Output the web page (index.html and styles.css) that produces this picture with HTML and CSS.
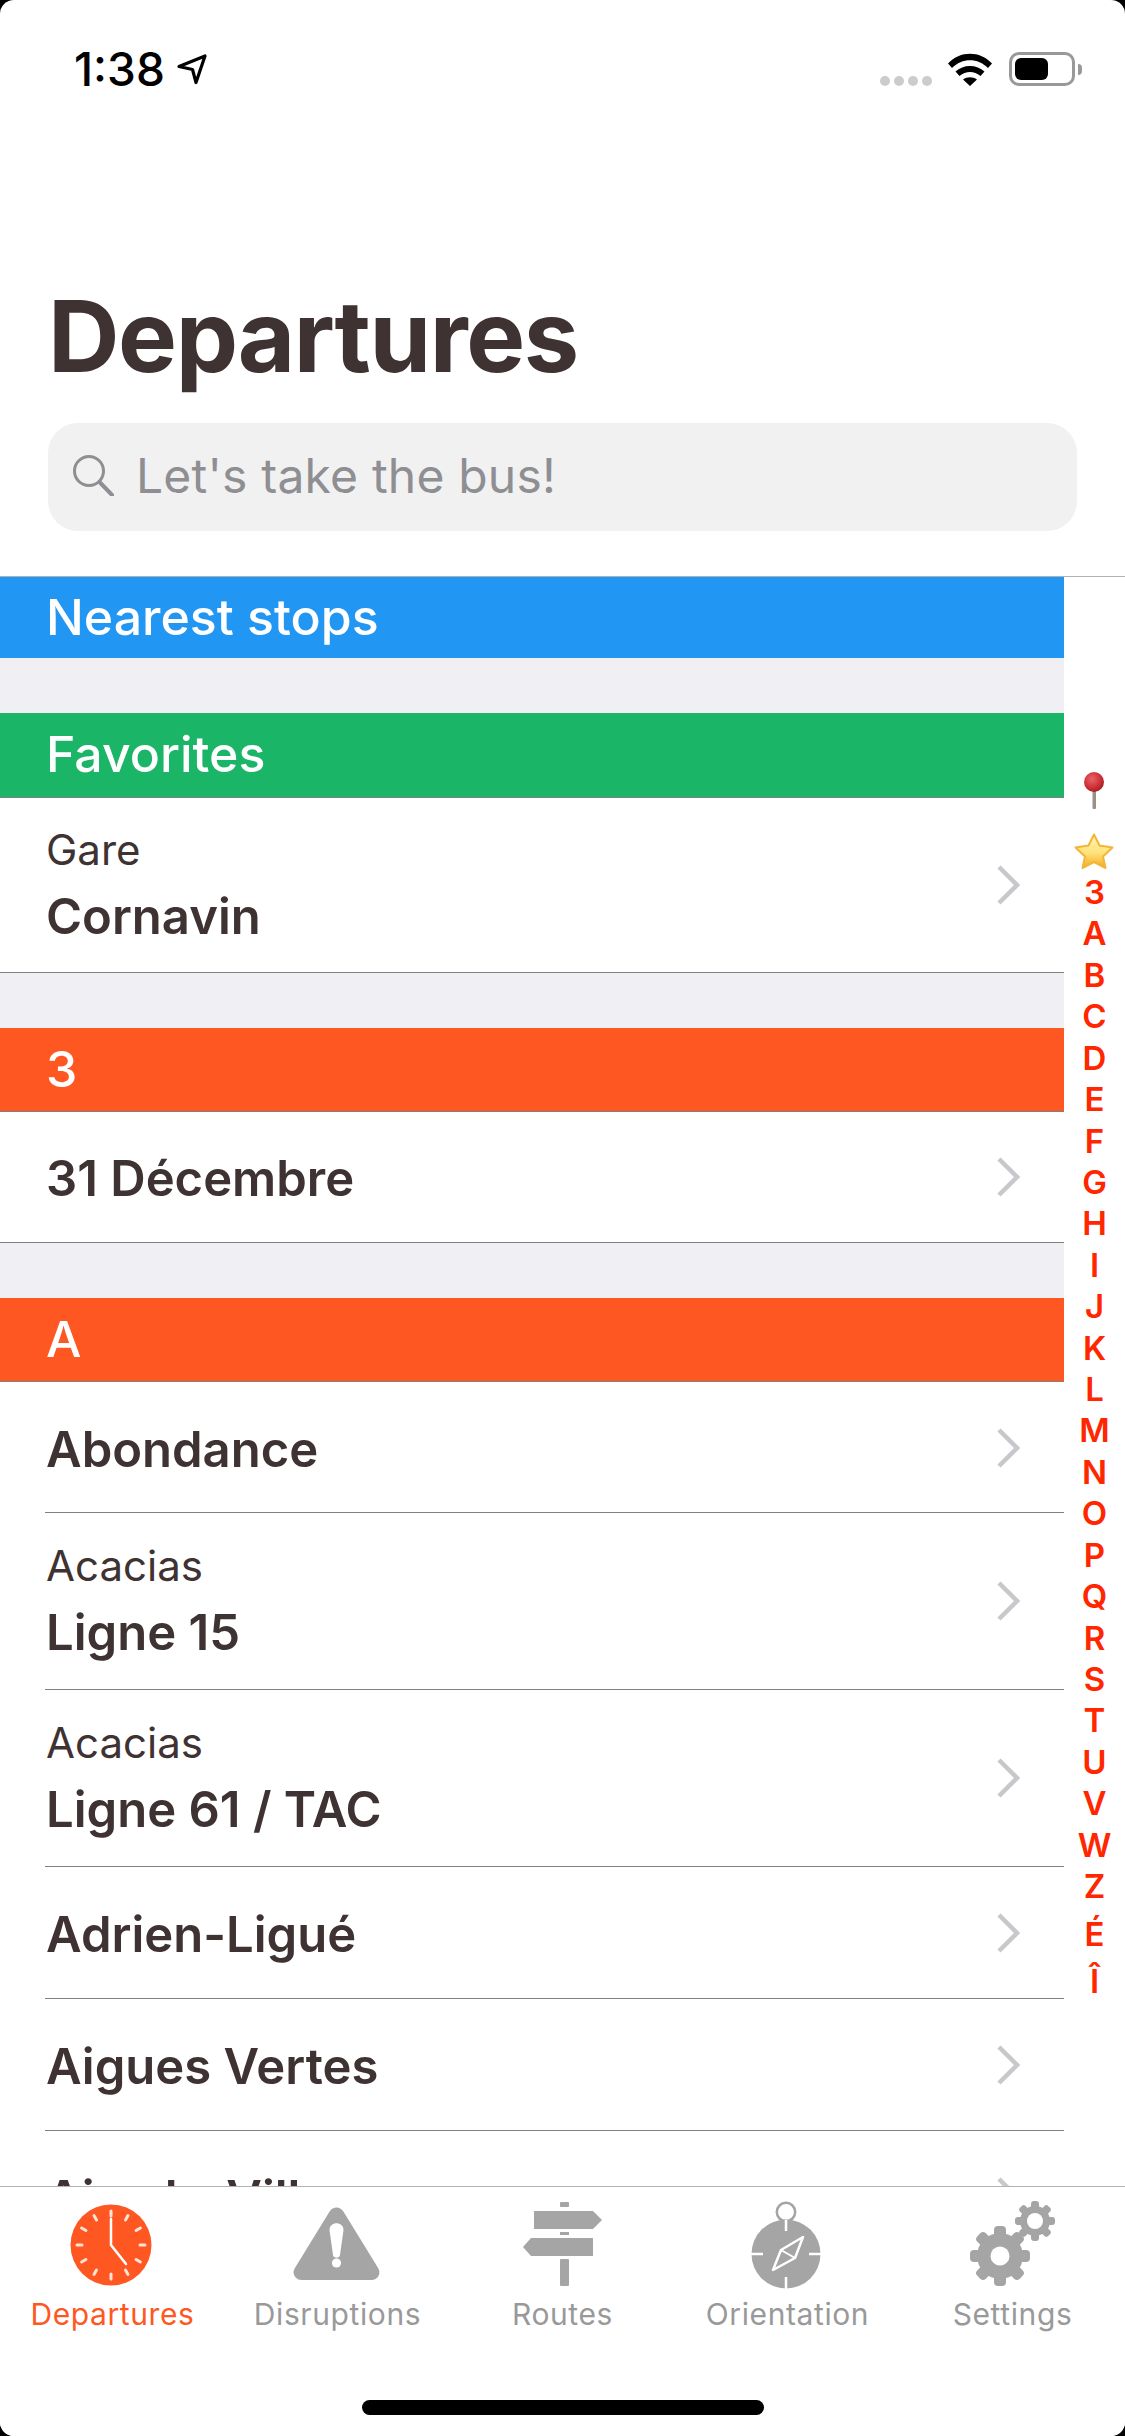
FILE: index.html
```html
<!DOCTYPE html>
<html lang="en">
<head>
<meta charset="utf-8">
<title>Departures</title>
<link rel="stylesheet" href="styles.css">
</head>
<body>
<div class="app">
  <header class="status">
    <div class="status-left">
      <span class="time">1:38</span>
      <svg class="loc" width="32" height="32" viewBox="0 0 32 32"><path d="M3 13.500L29 3 20 29.500 16.500 16.500Z" fill="none" stroke="#000" stroke-width="3.200" stroke-linejoin="round"/></svg>
    </div>
    <div class="status-right">
      <div class="signal"><i></i><i></i><i></i><i></i></div>
      <svg class="wifi" width="46" height="34" viewBox="0 0 46 34"><path d="M1 11.500C13 -1.500 33 -1.500 45 11.500L41 16C31 5.500 15 5.500 5 16Z M8.500 19.500C16 12 30 12 37.500 19.500L33.500 24C27 18.500 19 18.500 12.500 24Z M16 27.500C20 24.500 26 24.500 30 27.500L23 34Z" fill="#000"/></svg>
      <div class="battery"><div class="battery-fill"></div></div>
      <div class="battery-nub"></div>
    </div>
  </header>

  <h1 class="title">Departures</h1>

  <div class="search">
    <svg width="42" height="42" viewBox="0 0 42 42"><circle cx="17" cy="17" r="14.500" fill="none" stroke="#8e8e93" stroke-width="3"/><path d="M27.500 28L40 41" fill="none" stroke="#8e8e93" stroke-width="4" stroke-linecap="round"/></svg>
    <span class="search-text">Let's take the bus!</span>
  </div>

  <main class="main">
    <div class="list">
      <section class="section">
        <div class="head head-blue">Nearest stops</div>
      </section>
      <section class="section">
        <div class="head head-green">Favorites</div>
        <div class="row row-full row-two">
          <div class="row-text"><div class="sub">Gare</div><div class="name">Cornavin</div></div>
          <svg class="chev" width="24" height="40" viewBox="0 0 24 40"><path d="M3 2L21 20 3 38" fill="none" stroke="#c7c7cc" stroke-width="4.500"/></svg>
        </div>
      </section>
      <section class="section">
        <div class="head head-orange">3</div>
        <div class="row row-full row-one">
          <div class="row-text"><div class="name">31 Décembre</div></div>
          <svg class="chev" width="24" height="40" viewBox="0 0 24 40"><path d="M3 2L21 20 3 38" fill="none" stroke="#c7c7cc" stroke-width="4.500"/></svg>
        </div>
      </section>
      <section class="section">
        <div class="head head-orange">A</div>
        <div class="row row-one">
          <div class="row-text"><div class="name">Abondance</div></div>
          <svg class="chev" width="24" height="40" viewBox="0 0 24 40"><path d="M3 2L21 20 3 38" fill="none" stroke="#c7c7cc" stroke-width="4.500"/></svg>
        </div>
        <div class="row row-two">
          <div class="row-text"><div class="sub">Acacias</div><div class="name">Ligne 15</div></div>
          <svg class="chev" width="24" height="40" viewBox="0 0 24 40"><path d="M3 2L21 20 3 38" fill="none" stroke="#c7c7cc" stroke-width="4.500"/></svg>
        </div>
        <div class="row row-two">
          <div class="row-text"><div class="sub">Acacias</div><div class="name">Ligne 61 / TAC</div></div>
          <svg class="chev" width="24" height="40" viewBox="0 0 24 40"><path d="M3 2L21 20 3 38" fill="none" stroke="#c7c7cc" stroke-width="4.500"/></svg>
        </div>
        <div class="row row-one row-tall">
          <div class="row-text"><div class="name">Adrien-Ligué</div></div>
          <svg class="chev" width="24" height="40" viewBox="0 0 24 40"><path d="M3 2L21 20 3 38" fill="none" stroke="#c7c7cc" stroke-width="4.500"/></svg>
        </div>
        <div class="row row-one row-tall">
          <div class="row-text"><div class="name">Aigues Vertes</div></div>
          <svg class="chev" width="24" height="40" viewBox="0 0 24 40"><path d="M3 2L21 20 3 38" fill="none" stroke="#c7c7cc" stroke-width="4.500"/></svg>
        </div>
        <div class="row row-one">
          <div class="row-text"><div class="name">Aire-la-Ville</div></div>
          <svg class="chev" width="24" height="40" viewBox="0 0 24 40"><path d="M3 2L21 20 3 38" fill="none" stroke="#c7c7cc" stroke-width="4.500"/></svg>
        </div>
      </section>
    </div>

    <nav class="index">
      <svg class="index-pin" width="24" height="38" viewBox="0 0 24 38">
        <defs><radialGradient id="pinball" cx="0.4" cy="0.35" r="0.7"><stop offset="0" stop-color="#e8636b"/><stop offset="0.6" stop-color="#cf3238"/><stop offset="1" stop-color="#a01c22"/></radialGradient></defs>
        <rect x="10.500" y="18" width="3.500" height="20" rx="1" fill="#9a9085"/>
        <circle cx="12" cy="11" r="10" fill="url(#pinball)"/>
      </svg>
      <svg class="index-star" width="42" height="38" viewBox="0 0 42 38">
        <defs><linearGradient id="stargrad" x1="0" y1="0" x2="0" y2="1"><stop offset="0" stop-color="#fff3b8"/><stop offset="0.55" stop-color="#ffe27a"/><stop offset="1" stop-color="#f4a91f"/></linearGradient></defs>
        <path d="M21 2.500L26.500 13.500 39.500 15.500 30 24.500 32.500 36 21 30 9.500 36 12 24.500 2.500 15.500 15.500 13.500Z" fill="url(#stargrad)" stroke="#f2b638" stroke-width="2" stroke-linejoin="round"/>
      </svg>
      <span>3</span><span>A</span><span>B</span><span>C</span><span>D</span><span>E</span><span>F</span><span>G</span><span>H</span><span>I</span><span>J</span><span>K</span><span>L</span><span>M</span><span>N</span><span>O</span><span>P</span><span>Q</span><span>R</span><span>S</span><span>T</span><span>U</span><span>V</span><span>W</span><span>Z</span><span class="accented">É</span><span class="accented">Î</span>
    </nav>
  </main>

  <footer class="tabbar">
    <div class="tabs">
      <div class="tab tab-active">
        <svg width="110" height="90" viewBox="-53 -45 110 90">
          <circle cx="0" cy="0" r="40.500" fill="#ff5722"/>
          <g stroke="#ffe3d8" stroke-width="3" stroke-linecap="round">
            <path d="M0 -34V-29"/><path d="M0 34V29"/><path d="M-34 0H-29"/><path d="M34 0H29"/>
            <path d="M17 -29.400L14.500 -25.100"/><path d="M-17 -29.400L-14.500 -25.100"/><path d="M17 29.400L14.500 25.100"/><path d="M-17 29.400L-14.500 25.100"/>
            <path d="M29.400 -17L25.100 -14.500"/><path d="M-29.400 -17L-25.100 -14.500"/><path d="M29.400 17L25.100 14.500"/><path d="M-29.400 17L-25.100 14.500"/>
          </g>
          <path d="M0 -26V0L15 19" fill="none" stroke="#fff" stroke-width="2.500" stroke-linecap="round"/>
        </svg>
        <span>Departures</span>
      </div>
      <div class="tab">
        <svg width="110" height="90" viewBox="-53.500 -45 110 90">
          <path d="M0 -32.500L35 27 L-35 27Z" fill="#a5a5a5" stroke="#a5a5a5" stroke-width="16" stroke-linejoin="round" transform="translate(0 1.500) scale(1 0.96)"/>
          <path d="M-7 -15C-7 -24 7 -24 7 -15L3.500 10C3 13.500 -3 13.500 -3.500 10Z" fill="#fff"/>
          <circle cx="0" cy="18" r="4.600" fill="#fff"/>
        </svg>
        <span>Disruptions</span>
      </div>
      <div class="tab">
        <svg width="110" height="90" viewBox="-55 -45 110 90">
          <g fill="#a5a5a5">
            <rect x="-3" y="-43" width="9" height="5" rx="1"/>
            <path d="M-29 -34H30L39 -25 30 -16H-29Z"/>
            <rect x="-3" y="-13" width="9" height="3"/>
            <path d="M-40 2 L-32 -7H30V11H-32Z"/>
            <rect x="-3" y="14" width="9" height="27" rx="1"/>
          </g>
        </svg>
        <span>Routes</span>
      </div>
      <div class="tab">
        <svg width="110" height="90" viewBox="-55 -45 110 90">
          <circle cx="-2" cy="-33" r="9.200" fill="none" stroke="#a5a5a5" stroke-width="2.500"/>
          <circle cx="-2" cy="9" r="34.500" fill="#a5a5a5"/>
          <g stroke="#fff" stroke-width="2.500">
            <path d="M-2 -25V-14"/><path d="M-2 32V44"/><path d="M-37 9H-25"/><path d="M21 9H33"/>
          </g>
          <path d="M15 -8L7 13 -15 25 -7 5Z" fill="none" stroke="#fff" stroke-width="2.500" stroke-linejoin="round"/>
          <path d="M-7 5L7 13" stroke="#fff" stroke-width="2"/>
        </svg>
        <span>Orientation</span>
      </div>
      <div class="tab">
        <svg width="110" height="90" viewBox="-55 -45 110 90">
          <g fill="#a5a5a5" transform="translate(-13 11)">
            <circle r="23"/>
            <rect x="-6" y="-30" width="12" height="60" rx="4"/>
            <rect x="-6" y="-30" width="12" height="60" rx="4" transform="rotate(45)"/>
            <rect x="-6" y="-30" width="12" height="60" rx="4" transform="rotate(90)"/>
            <rect x="-6" y="-30" width="12" height="60" rx="4" transform="rotate(135)"/>
            <circle r="9.500" fill="#fff"/>
          </g>
          <g fill="#a5a5a5" transform="translate(22 -24)">
            <circle r="15"/>
            <rect x="-4" y="-20" width="8" height="40" rx="3"/>
            <rect x="-4" y="-20" width="8" height="40" rx="3" transform="rotate(45)"/>
            <rect x="-4" y="-20" width="8" height="40" rx="3" transform="rotate(90)"/>
            <rect x="-4" y="-20" width="8" height="40" rx="3" transform="rotate(135)"/>
            <circle r="8" fill="#fff"/>
          </g>
        </svg>
        <span>Settings</span>
      </div>
    </div>
    <div class="home"></div>
  </footer>
</div>
</body>
</html>
```

FILE: styles.css
```css
* { box-sizing: border-box; }
html, body { margin: 0; padding: 0; background: #000; }
body { width: 1125px; height: 2436px; font-family: Inter, "Noto Sans", sans-serif; color: #3e3232; overflow: hidden; }
.app { width: 1125px; height: 2436px; background: #fff; border-radius: 14px; overflow: hidden; display: flex; flex-direction: column; }

.status { height: 110px; flex: none; display: flex; justify-content: space-between; align-items: flex-start; padding: 42px 43px 0 74px; }
.status-left { display: flex; align-items: center; gap: 11px; color: #000; }
.time { font-size: 46px; line-height: 54px; font-weight: 500; }
.status-right { display: flex; align-items: flex-start; padding-top: 10px; }
.signal { display: flex; gap: 4px; margin: 24px 15px 0 0; }
.signal i { width: 10px; height: 10px; border-radius: 50%; background: #ccc; }
.wifi { margin-right: 16px; }
.battery { width: 66px; height: 34px; border: 3px solid #999; border-radius: 10px; padding: 3px; }
.battery-fill { width: 33px; height: 22px; border-radius: 6px; background: #000; }
.battery-nub { width: 4px; height: 11px; margin: 12px 0 0 3px; background: #999; border-radius: 0 4px 4px 0; }

.title { flex: none; margin: 166px 0 0 48px; font-size: 99px; line-height: 120px; font-weight: 700; color: #3e3232; letter-spacing: -1.400px; }

.search { flex: none; margin: 27px 48px 45px 48px; height: 108px; background: #f1f1f1; border-radius: 30px; display: flex; align-items: center; gap: 22px; padding: 0 0 4px 24px; }
.search-text { font-size: 48px; color: #8e8e93; letter-spacing: 0.200px; }

.main { flex: 1; min-height: 0; display: flex; border-top: 1px solid #b2b2b2; }
.list { width: 1064px; flex: none; background: #efeff4; overflow: hidden; display: flex; flex-direction: column; gap: 55px; }
.head { padding: 0 0 2px 46px; height: 84px; border-bottom: 1px solid #808080; display: flex; align-items: center; color: #fff; font-size: 50px; font-weight: 500; }
.head-blue { background: #2196f3; height: 81px; border-bottom: none; }
.head-green { background: #1ab566; height: 85px; }
.head-orange { background: #ff5722; }

.row { background: #fff; padding: 0 45px 0 46px; display: flex; align-items: center; justify-content: space-between; }
.row-two { height: 177px; padding-bottom: 1px; }
.row-one { height: 131px; }
.row-tall { height: 132px; }
.row-full.row-two { height: 175px; }
.row-full { border-bottom: 1px solid #808080; }
.row:not(.row-full) { background: linear-gradient(#808080, #808080) 45px 100% / 100% 1px no-repeat #fff; }
.row-text { display: flex; flex-direction: column; gap: 10px; padding-top: 2px; }
.sub { font-size: 42px; line-height: 50px; color: #3e3232; }
.name { font-size: 49px; line-height: 60px; font-weight: 600; color: #3e3232; margin-top: 2px; }
.chev { flex: none; margin-right: -1px; }

.index { flex: 1; background: #fff; display: flex; flex-direction: column; align-items: center; padding-top: 194px; color: #ff2600; font-size: 33px; font-weight: 600; }
.index span { height: 41.430px; line-height: 41.430px; }
.index .accented { height: 47px; line-height: 52px; }
.index-pin { flex: none; margin: 0 1px 23px 0; }
.index-star { flex: none; margin: 0 2px 2px 0; }

.tabbar { flex: none; height: 250px; background: #fff; border-top: 1px solid #b2b2b2; position: relative; z-index: 1; }
.tabs { display: grid; grid-template-columns: repeat(5, 225px); padding-top: 13px; }
.tab { display: flex; flex-direction: column; align-items: center; color: #999; font-size: 30px; font-weight: 400; letter-spacing: 0.600px; line-height: 36px; }
.tab svg { display: block; margin-bottom: 6px; }
.tab-active { color: #ff5722; }
.home { width: 402px; height: 15px; border-radius: 8px; background: #000; margin: 68px auto 0; }
```
